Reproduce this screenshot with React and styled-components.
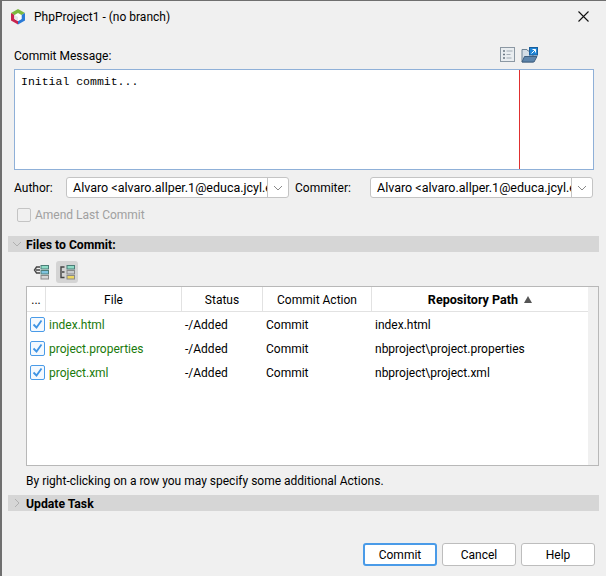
import React from 'react';
import styled, { createGlobalStyle } from 'styled-components';

const GlobalStyle = createGlobalStyle`
  html, body { margin: 0; padding: 0; background: #f0f0f0; }
  body { font-family: Roboto, "Open Sans", sans-serif; font-size: 12px; color: #000; }
`;

const Window = styled.div`
  width: 606px;
  height: 576px;
  box-sizing: border-box;
  background: #f0f0f0;
  border-left: 2px solid #6f6f6f;
  border-top: 1px solid #6f6f6f;
  display: flex;
  flex-direction: column;
  overflow: hidden;
`;

const TitleBar = styled.div`
  height: 31px;
  display: flex;
  align-items: center;
  padding: 0 17px 0 8px;
  gap: 8px;
  font-size: 12px;
`;

const TitleText = styled.span`
  flex: 1;
`;

const MessageHead = styled.div`
  height: 37px;
  display: flex;
  align-items: flex-end;
  justify-content: space-between;
  padding: 0 68px 0 12px;
  box-sizing: border-box;
`;

const HeadLabel = styled.span`
  line-height: 16px;
  margin-bottom: 5px;
`;

const HeadIcons = styled.div`
  display: flex;
  gap: 6px;
  margin-bottom: 6px;
`;

const MessageBox = styled.div`
  margin: 0 12px;
  height: 101px;
  box-sizing: border-box;
  border: 1px solid #8fb0d8;
  background: #fff;
  display: flex;
`;

const MessageText = styled.div`
  width: 505px;
  box-sizing: border-box;
  border-right: 1px solid #e03030;
  padding: 5px 6px;
  font-family: "Liberation Mono", monospace;
  font-size: 11.500px;
  line-height: 14px;
`;

const PeopleRow = styled.div`
  display: flex;
  align-items: center;
  margin-top: 7px;
  padding-left: 12px;
  height: 21px;
`;

const PeopleLabel = styled.span`
  width: ${p => p.$w}px;
  box-sizing: border-box;
  padding-left: ${p => p.$pad || 0}px;
`;

const Combo = styled.div`
  width: ${p => p.$w}px;
  height: 21px;
  box-sizing: border-box;
  border: 1px solid #c4c4c4;
  border-radius: 3px;
  background: #fff;
  display: flex;
`;

const ComboText = styled.div`
  flex: 1;
  min-width: 0;
  overflow: hidden;
  white-space: nowrap;
  padding: 0 6px;
  font-size: 12.500px;
  line-height: 19px;
`;

const ComboArrow = styled.div`
  width: 20px;
  border-left: 1px solid #c4c4c4;
  display: flex;
  align-items: center;
  justify-content: center;
`;

const AmendRow = styled.div`
  display: flex;
  align-items: center;
  gap: 4px;
  height: 16px;
  margin: 9px 0 0 15px;
  color: #a0a0a0;
`;

const DisabledBox = styled.span`
  width: 12px;
  height: 12px;
  border: 1px solid #c4c4c4;
  border-radius: 2px;
`;

const SectionBar = styled.div`
  margin: ${p => p.$top}px 7px 0 6px;
  height: 16px;
  background: #d6d6d6;
  display: flex;
  align-items: center;
  font-weight: 700;
  font-size: 12.200px;
  line-height: 16px;
`;

const SectionLabel = styled.span`
  padding-top: 1px;
`;

const SectionCaret = styled.span`
  width: 18px;
  display: flex;
  justify-content: center;
`;

const Toolbar = styled.div`
  display: flex;
  gap: 4px;
  margin: 9px 0 0 28px;
  height: 22px;
`;

const ToolButton = styled.div`
  width: 22px;
  height: 22px;
  border-radius: 3px;
  background: ${p => (p.$active ? '#d4d4d4' : 'transparent')};
  display: flex;
  align-items: center;
  justify-content: center;
`;

const TableFrame = styled.div`
  margin: 3px 7px 0 24px;
  height: 180px;
  box-sizing: border-box;
  border: 1px solid #b8b8b8;
  background: #fff;
  display: flex;
`;

const TableBody = styled.div`
  width: 561px;
`;

const TableGutter = styled.div`
  flex: 1;
  background: #f0f0f0;
`;

const HeaderRow = styled.div`
  height: 25px;
  display: flex;
  border-bottom: 1px solid #e2e2e2;
  box-sizing: border-box;
`;

const HeaderCell = styled.div`
  width: ${p => p.$w}px;
  box-sizing: border-box;
  padding-top: 1px;
  border-right: ${p => (p.$last ? 'none' : '1px solid #e2e2e2')};
  display: flex;
  align-items: center;
  justify-content: center;
  gap: 6px;
  font-weight: ${p => (p.$bold ? 700 : 400)};
  font-size: ${p => (p.$bold ? 12.6 : 12)}px;
`;

const SortMark = styled.span`
  width: 0;
  height: 0;
  border-left: 4px solid transparent;
  border-right: 4px solid transparent;
  border-bottom: 7px solid #555;
`;

const Row = styled.div`
  height: 24px;
  display: flex;
  align-items: center;
`;

const Cell = styled.div`
  width: ${p => p.$w}px;
  box-sizing: border-box;
  padding-left: ${p => p.$pad ?? 3}px;
  padding-top: ${p => (p.$pad ? 0 : 1)}px;
  color: ${p => p.$color || '#000'};
  white-space: nowrap;
  display: flex;
  align-items: center;
`;

const Check = styled.span`
  width: 13px;
  height: 13px;
  border: 1px solid #4a9be8;
  border-radius: 2px;
  background: #f4f9fe;
  display: flex;
  align-items: center;
  justify-content: center;
`;

const Hint = styled.div`
  margin: 7px 0 0 24px;
  height: 16px;
  line-height: 16px;
`;

const Footer = styled.div`
  margin-top: 32px;
  display: flex;
  gap: 5px;
  padding-left: 361px;
`;

const Button = styled.button`
  width: ${p => p.$w}px;
  height: 23px;
  padding: 0;
  box-sizing: border-box;
  background: #fff;
  border: ${p => (p.$primary ? '2px solid #4a9be8' : '1px solid #bdbdbd')};
  border-radius: 3px;
  font: inherit;
  color: #000;
`;

const Chevron = ({ dir = 'down', color = '#8a8a8a' }) => (
  <svg width="10" height="10" viewBox="0 0 10 10" fill="none" stroke={color} strokeWidth="1">
    <path d={dir === 'down' ? 'M1 3l4 4 4-4' : 'M3 1l4 4-4 4'} />
  </svg>
);

const Logo = () => (
  <svg width="16" height="17" viewBox="0 0 16 17">
    <path d="M8 1l7 4-7 4-7-4z" fill="#7cb83e" />
    <path d="M15 5v7.500L8 16.500V13l3.500-2V7z" fill="#2a7ad6" />
    <path d="M1 5v7.500l7 4V13l-3.500-2V7z" fill="#c9244f" />
    <path d="M8 5l3.500 2v4L8 13l-3.500-2V7z" fill="#fdfdfd" />
    <path d="M8 9v4l-3.500-2V7z" fill="#e4e6ea" />
  </svg>
);

const CloseIcon = () => (
  <svg width="11" height="11" viewBox="0 0 11 11" stroke="#111" strokeWidth="1.100">
    <path d="M0.500 0.500l10 10M10.500 0.500l-10 10" />
  </svg>
);

const ListIcon = () => (
  <svg width="15" height="15" viewBox="0 0 15 15" fill="none">
    <rect x="0.500" y="0.500" width="14" height="14" fill="#e9edf0" stroke="#8c98a3" />
    <path d="M3 4h2M3 7.500h2M3 11h2" stroke="#6b7883" strokeWidth="1.500" />
    <path d="M6.500 4h6M6.500 7.500h4M6.500 11h5" stroke="#a2acb5" />
  </svg>
);

const FolderIcon = () => (
  <svg width="17" height="16" viewBox="0 0 17 16">
    <path d="M1 2.500h5l1 1.500h5v11H1z" fill="#d3dde6" stroke="#6c8295" />
    <path d="M3.500 9.500H16l-3 5.500H1z" fill="#5d85ac" stroke="#3f5f80" />
    <rect x="8.500" y="0.500" width="8" height="7.500" fill="#1f86d8" stroke="#1a5f9c" />
    <path d="M10.500 6.500l4-4M11.500 2.500h3v3" stroke="#fff" fill="none" />
  </svg>
);

const TreeIcon = ({ alt }) => (
  <svg width="16" height="16" viewBox="0 0 16 16" fill="none">
    <rect x="8" y="1.500" width="7.500" height="3.500" fill="#8fdcc6" stroke="#4c7d78" />
    <rect x="8" y="6.500" width="7.500" height="3.500" fill={alt ? '#c9ccce' : '#7fc4e0'} stroke={alt ? '#8a8a8a' : '#4c7d78'} />
    <rect x="8" y="11.500" width="7.500" height="3.500" fill={alt ? '#efd860' : '#d6d6d6'} stroke="#8a8a8a" />
    {alt
      ? <path d="M5.500 3H2v10.500h3.500M5.500 8H3" stroke="#444" strokeWidth="1.400" />
      : <path d="M7 3H3.500L1.500 6 3.500 9H7M3 6h4" stroke="#444" strokeWidth="1.400" />}
  </svg>
);

const Tick = () => (
  <svg width="11" height="11" viewBox="0 0 11 11" fill="none" stroke="#3f94e4" strokeWidth="1.800">
    <path d="M1.500 5.500l3 3 5-7" />
  </svg>
);

const COLS = [
  { name: '...', w: 19 },
  { name: 'File', w: 136 },
  { name: 'Status', w: 81 },
  { name: 'Commit Action', w: 109 },
  { name: 'Repository Path', w: 216, bold: true, last: true },
];

const FILES = [
  { file: 'index.html', path: 'index.html' },
  { file: 'project.properties', path: 'nbproject\\project.properties' },
  { file: 'project.xml', path: 'nbproject\\project.xml' },
];

const AUTHOR = 'Alvaro <alvaro.allper.1@educa.jcyl.es>';

export default function App() {
  return (
    <Window>
      <GlobalStyle />
      <TitleBar>
        <Logo />
        <TitleText>PhpProject1 - (no branch)</TitleText>
        <CloseIcon />
      </TitleBar>
      <MessageHead>
        <HeadLabel>Commit Message:</HeadLabel>
        <HeadIcons>
          <ListIcon />
          <FolderIcon />
        </HeadIcons>
      </MessageHead>
      <MessageBox>
        <MessageText>Initial commit...</MessageText>
      </MessageBox>
      <PeopleRow>
        <PeopleLabel $w={52}>Author:</PeopleLabel>
        <Combo $w={223}>
          <ComboText>{AUTHOR}</ComboText>
          <ComboArrow><Chevron /></ComboArrow>
        </Combo>
        <PeopleLabel $w={81} $pad={6}>Commiter:</PeopleLabel>
        <Combo $w={223}>
          <ComboText>{AUTHOR}</ComboText>
          <ComboArrow><Chevron /></ComboArrow>
        </Combo>
      </PeopleRow>
      <AmendRow>
        <DisabledBox />
        Amend Last Commit
      </AmendRow>
      <SectionBar $top={13}>
        <SectionCaret><Chevron color="#b0b0b0" /></SectionCaret>
        <SectionLabel>Files to Commit:</SectionLabel>
      </SectionBar>
      <Toolbar>
        <ToolButton><TreeIcon /></ToolButton>
        <ToolButton $active><TreeIcon alt /></ToolButton>
      </Toolbar>
      <TableFrame>
        <TableBody>
          <HeaderRow>
            {COLS.map(c => (
              <HeaderCell key={c.name} $w={c.w} $bold={c.bold} $last={c.last}>
                {c.name}
                {c.bold && <SortMark />}
              </HeaderCell>
            ))}
          </HeaderRow>
          {FILES.map(f => (
            <Row key={f.file}>
              <Cell $w={19} $pad={3}><Check><Tick /></Check></Cell>
              <Cell $w={136} $color="#1a7a0c">{f.file}</Cell>
              <Cell $w={81}>-/Added</Cell>
              <Cell $w={109}>Commit</Cell>
              <Cell $w={216}>{f.path}</Cell>
            </Row>
          ))}
        </TableBody>
        <TableGutter />
      </TableFrame>
      <Hint>By right-clicking on a row you may specify some additional Actions.</Hint>
      <SectionBar $top={6}>
        <SectionCaret><Chevron dir="right" color="#b0b0b0" /></SectionCaret>
        <SectionLabel>Update Task</SectionLabel>
      </SectionBar>
      <Footer>
        <Button $w={74} $primary>Commit</Button>
        <Button $w={74}>Cancel</Button>
        <Button $w={74}>Help</Button>
      </Footer>
    </Window>
  );
}
